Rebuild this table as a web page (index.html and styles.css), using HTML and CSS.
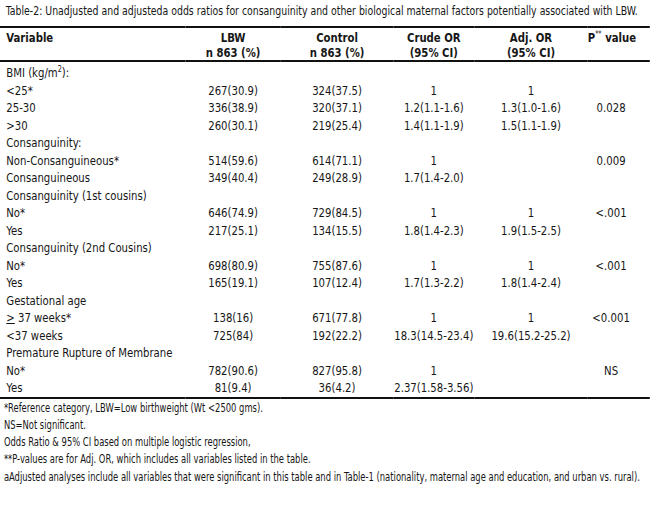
FILE: index.html
```html
<!DOCTYPE html>
<html>
<head>
<meta charset="utf-8">
<link rel="stylesheet" href="styles.css">
</head>
<body>
<div class="page">
  <p class="title">Table-2: Unadjusted and adjusteda odds ratios for consanguinity and other biological maternal factors potentially associated with LBW.</p>
  <div class="tblwrap">
  <table class="tbl">
    <colgroup>
      <col class="c1"><col class="c2"><col class="c3"><col class="c4"><col class="c5"><col class="c6">
    </colgroup>
    <thead>
      <tr class="h1">
        <th class="lab">Variable</th><th>LBW</th><th>Control</th><th>Crude OR</th><th>Adj. OR</th><th class="last">P<sup class="ast">**</sup> value</th>
      </tr>
      <tr class="h2">
        <th class="lab"></th><th>n 863 (%)</th><th>n 863 (%)</th><th>(95% CI)</th><th>(95% CI)</th><th class="last"></th>
      </tr>
    </thead>
    <tbody>
      <tr class="first"><td class="lab">BMI (kg/m<sup>2</sup>):</td><td></td><td></td><td></td><td></td><td class="last"></td></tr>
      <tr><td class="lab">&lt;25*</td><td>267(30.9)</td><td>324(37.5)</td><td>1</td><td>1</td><td class="last"></td></tr>
      <tr><td class="lab">25-30</td><td>336(38.9)</td><td>320(37.1)</td><td>1.2(1.1-1.6)</td><td>1.3(1.0-1.6)</td><td class="last">0.028</td></tr>
      <tr><td class="lab">&gt;30</td><td>260(30.1)</td><td>219(25.4)</td><td>1.4(1.1-1.9)</td><td>1.5(1.1-1.9)</td><td class="last"></td></tr>
      <tr><td class="lab">Consanguinity:</td><td></td><td></td><td></td><td></td><td class="last"></td></tr>
      <tr><td class="lab">Non-Consanguineous*</td><td>514(59.6)</td><td>614(71.1)</td><td>1</td><td></td><td class="last">0.009</td></tr>
      <tr><td class="lab">Consanguineous</td><td>349(40.4)</td><td>249(28.9)</td><td>1.7(1.4-2.0)</td><td></td><td class="last"></td></tr>
      <tr><td class="lab">Consanguinity (1st cousins)</td><td></td><td></td><td></td><td></td><td class="last"></td></tr>
      <tr><td class="lab">No*</td><td>646(74.9)</td><td>729(84.5)</td><td>1</td><td>1</td><td class="last">&lt;.001</td></tr>
      <tr><td class="lab">Yes</td><td>217(25.1)</td><td>134(15.5)</td><td>1.8(1.4-2.3)</td><td>1.9(1.5-2.5)</td><td class="last"></td></tr>
      <tr><td class="lab">Consanguinity (2nd Cousins)</td><td></td><td></td><td></td><td></td><td class="last"></td></tr>
      <tr><td class="lab">No*</td><td>698(80.9)</td><td>755(87.6)</td><td>1</td><td>1</td><td class="last">&lt;.001</td></tr>
      <tr><td class="lab">Yes</td><td>165(19.1)</td><td>107(12.4)</td><td>1.7(1.3-2.2)</td><td>1.8(1.4-2.4)</td><td class="last"></td></tr>
      <tr><td class="lab">Gestational age</td><td></td><td></td><td></td><td></td><td class="last"></td></tr>
      <tr><td class="lab"><span class="ul">&gt;</span> 37 weeks*</td><td>138(16)</td><td>671(77.8)</td><td>1</td><td>1</td><td class="last">&lt;0.001</td></tr>
      <tr><td class="lab">&lt;37 weeks</td><td>725(84)</td><td>192(22.2)</td><td>18.3(14.5-23.4)</td><td>19.6(15.2-25.2)</td><td class="last"></td></tr>
      <tr><td class="lab">Premature Rupture of Membrane</td><td></td><td></td><td></td><td></td><td class="last"></td></tr>
      <tr><td class="lab">No*</td><td>782(90.6)</td><td>827(95.8)</td><td>1</td><td></td><td class="last">NS</td></tr>
      <tr><td class="lab">Yes</td><td>81(9.4)</td><td>36(4.2)</td><td>2.37(1.58-3.56)</td><td></td><td class="last"></td></tr>
    </tbody>
  </table>
  </div>
  <div class="notes">
    <p>*Reference category, LBW=Low birthweight (Wt &lt;2500 gms).</p>
    <p>NS=Not significant.</p>
    <p>Odds Ratio &amp; 95% CI based on multiple logistic regression,</p>
    <p>**P-values are for Adj. OR, which includes all variables listed in the table.</p>
    <p>aAdjusted analyses include all variables that were significant in this table and in Table-1 (nationality, maternal age and education, and urban vs. rural).</p>
  </div>
</div>
</body>
</html>
```

FILE: styles.css
```css
html, body {
  margin: 0;
  padding: 0;
  background: #ffffff;
  overflow: hidden;
}
body {
  font-family: "DejaVu Sans Condensed", "DejaVu Sans", sans-serif;
  font-stretch: condensed;
  color: #161616;
  font-size: 12.5px;
}
.page {
  width: 650px;
}
.title {
  margin: 0;
  padding: 3px 0 0 7px;
  height: 23px;
  box-sizing: border-box;
  line-height: 15px;
  white-space: nowrap;
  transform: scaleX(0.832);
  transform-origin: 0 0;
}
.tblwrap {
  width: 722px;
  margin-top: 3px;
  transform: scaleX(0.9);
  transform-origin: 0 0;
}
.tbl {
  width: 722px;
  border-collapse: collapse;
  table-layout: fixed;
  border-top: 2px solid #111;
  border-bottom: 2px solid #111;
}
.c1 { width: 206px; }
.c2 { width: 106px; }
.c3 { width: 125px; }
.c4 { width: 90px; }
.c5 { width: 126px; }
.c6 { width: 69px; }
th, td {
  padding: 0;
  text-align: center;
  white-space: nowrap;
}
th {
  font-weight: bold;
  height: 15px;
  line-height: 15px;
}
thead tr.h1 th {
  padding-top: 2px;
}
thead tr.h2 th {
  border-bottom: 2px solid #111;
}
td {
  height: 17.5px;
  line-height: 17.5px;
}
tbody tr.first td {
  padding-top: 2px;
}
.lab {
  text-align: left;
  padding-left: 7px;
}
.last {
  padding-right: 17px;
}
sup {
  font-size: 8px;
  line-height: 0;
  vertical-align: 5px;
}
sup.ast {
  font-weight: normal;
}
.ul {
  text-decoration: underline;
}
.notes {
  padding-top: 1px;
  transform: scaleX(0.777);
  transform-origin: 0 0;
  font-size: 12px;
}
.notes p {
  margin: 0;
  padding-left: 5px;
  line-height: 17.25px;
  white-space: nowrap;
}
```
